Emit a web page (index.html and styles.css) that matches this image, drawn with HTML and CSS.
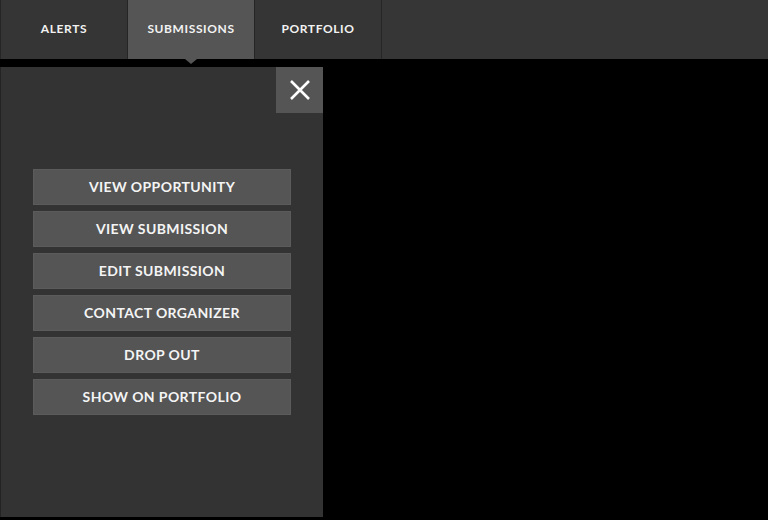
FILE: index.html
```html
<!DOCTYPE html>
<html>
<head>
<meta charset="utf-8">
<link rel="stylesheet" href="styles.css">
</head>
<body>
<nav class="tabs">
  <a class="tab">ALERTS</a>
  <a class="tab active">SUBMISSIONS</a>
  <a class="tab">PORTFOLIO</a>
  <div class="tab-fill"></div>
</nav>
<section class="panel">
  <button class="close" aria-label="Close">
    <svg width="22" height="22" viewBox="0 0 22 22"><path d="M2 2 L20 20 M20 2 L2 20" stroke="#fff" stroke-width="2.6" fill="none"/></svg>
  </button>
  <div class="actions">
    <a class="action">VIEW OPPORTUNITY</a>
    <a class="action">VIEW SUBMISSION</a>
    <a class="action">EDIT SUBMISSION</a>
    <a class="action">CONTACT ORGANIZER</a>
    <a class="action">DROP OUT</a>
    <a class="action">SHOW ON PORTFOLIO</a>
  </div>
</section>
</body>
</html>
```
FILE: styles.css
```css
html, body {
  margin: 0;
  padding: 0;
  background: #000;
  font-family: Lato, "Open Sans", sans-serif;
}
.tabs {
  display: flex;
  height: 59px;
  background: #353535;
}
.tab {
  position: relative;
  width: 126px;
  display: flex;
  align-items: center;
  justify-content: center;
  background: #353535;
  color: #f2f2f2;
  font-size: 12px;
  font-weight: 700;
  letter-spacing: 0.6px;
  border-right: 1px solid #262626;
  padding-bottom: 3px;
  box-sizing: border-box;
}
.tab:first-child {
  border-left: 1px solid #262626;
  width: 128px;
}
.tab.active {
  background: #555;
  width: 127px;
}
.tab:nth-child(3) {
  width: 127px;
}
.tab.active::after {
  content: "";
  position: absolute;
  left: 50%;
  bottom: -5px;
  margin-left: -6px;
  border-left: 6px solid transparent;
  border-right: 6px solid transparent;
  border-top: 5px solid #555;
}
.tab-fill {
  flex: 1;
  background: #363636;
}
.panel {
  position: relative;
  margin-top: 8px;
  width: 322px;
  height: 450px;
  background: #333;
  border-left: 1px solid #242424;
}
.close {
  position: absolute;
  top: 0;
  right: 0;
  width: 47px;
  height: 46px;
  border: 0;
  padding: 0;
  background: #555;
  display: flex;
  align-items: center;
  justify-content: center;
}
.actions {
  display: flex;
  flex-direction: column;
  gap: 6px;
  padding: 102px 0 0 32px;
  width: 258px;
}
.action {
  height: 36px;
  display: flex;
  align-items: center;
  justify-content: center;
  background: #555;
  color: #f4f4f4;
  font-size: 14px;
  font-weight: 700;
  letter-spacing: 0.4px;
  padding-bottom: 2px;
  box-sizing: border-box;
  box-shadow: inset 0 0 0 1px #5b5b5b;
}
```
